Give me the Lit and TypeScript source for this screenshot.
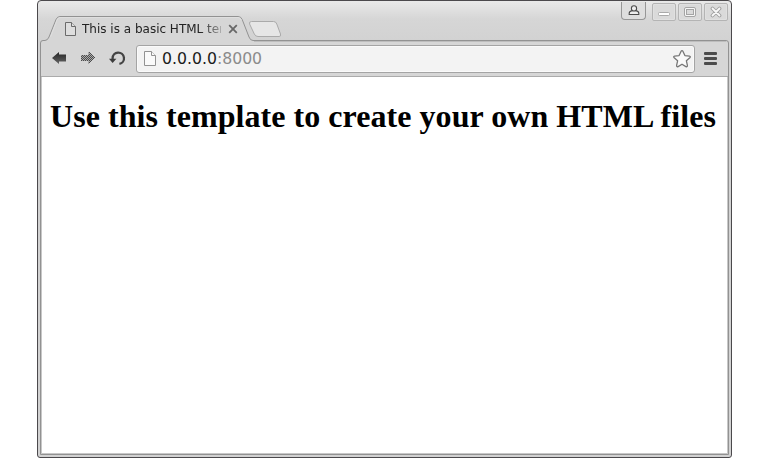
import { LitElement, html, css, svg } from "lit";
import { customElement } from "lit/decorators.js";

const pageIcon = (w: number, h: number, stroke: string, fill: string) => html`
  <svg width=${w} height=${h} viewBox="0 0 ${w} ${h}" fill=${fill} stroke=${stroke}>
    <path d="M.5.5H${w - 4.5}L${w - 0.5} 4.5V${h - 0.5}H.5Z" /><path d="M${w - 4.5}.5V4.5H${w - 0.5}" />
  </svg>`;

const checker = Array.from({ length: 14 * 12 }, (_, i) => [i % 14, Math.floor(i / 14)])
  .filter(([x, y]) => (x + y) % 2 === 0 && (x < 8 ? y >= 3 && y <= 8 : Math.abs(y - 5.5) <= 13.5 - x))
  .map(([x, y]) => svg`<rect x=${x} y=${y} width="1" height="1" />`);

@customElement("app-root")
export class AppRoot extends LitElement {
  static styles = css`
    :host { display: block; width: 770px; height: 458px; background: #fff; overflow: hidden; }
    * { box-sizing: border-box; }
    svg { display: block; flex: none; }
    .window {
      position: relative; display: flex; flex-direction: column;
      width: 695px; height: 458px; margin-left: 37px;
      border: 1px solid #4b494c; border-radius: 4px 4px 3px 3px;
      background: linear-gradient(#e9e9e9 0, #d6d6d6 18px, #d2d2d2 40px);
      overflow: hidden; font-family: "DejaVu Sans", sans-serif;
    }
    .outline { position: absolute; left: -1px; top: -1px; }
    .strip { position: relative; display: flex; height: 39px; flex: none; }
    .tab { display: flex; align-items: center; width: 205px; height: 25px; margin: 15px 0 0 9px; padding-left: 18px; }
    .title {
      width: 139px; margin-left: 6px; overflow: hidden; white-space: nowrap;
      font-size: 12px; line-height: 16px; color: #222;
      -webkit-mask-image: linear-gradient(90deg, #000 118px, transparent 150px);
      mask-image: linear-gradient(90deg, #000 118px, transparent 150px);
    }
    .close { margin-left: 7px; }
    .controls { display: flex; margin-left: auto; padding: 2px 1px 0 0; }
    .user {
      display: flex; justify-content: center; width: 25px; height: 18px; margin: -1px 6px 0 0; padding-top: 3px;
      border: 1px solid #969696; border-top: 0; border-radius: 0 0 4px 4px; background: #dedede;
    }
    .ctl {
      display: flex; align-items: center; justify-content: center; width: 24px; height: 18px; margin-right: 2px;
      border: 1px solid #b4b4b4; border-radius: 2px; background: #dadada; box-shadow: inset 0 0 0 1px #e0e0e0;
    }
    .toolbar { position: relative; display: flex; align-items: center; height: 37px; flex: none; padding: 1px 14px 0 14px; }
    .back { margin-top: -3px; }
    .forward { margin: -3px 0 0 15px; }
    .reload { margin: -1px 0 0 14px; }
    .address {
      display: flex; align-items: center; flex: 1; height: 28px; margin: -1px 9px 0 10px; padding: 0 3px 0 7px;
      border: 1px solid #a4a4a4; border-radius: 3px; background: #f3f3f3; box-shadow: inset 0 0 0 1px #fafafa;
    }
    .url { margin-left: 6px; font-size: 15.7px; line-height: 20px; color: #1b1b1b; white-space: nowrap; }
    .port { color: #8b8b8b; }
    .star { margin-left: auto; }
    .menu { margin-top: -2px; }
    .page { position: relative; flex: 1; margin: 0 4px 4px 4px; background: #fff; padding: 21px 8px; }
    h1 { margin: 0; font: bold 32px/37px "Liberation Serif", serif; letter-spacing: .05px; color: #000; white-space: nowrap; }
  `;

  render() {
    return html`
      <div class="window">
        <svg class="outline" width="695" height="458" viewBox="0 0 695 458" fill="none">
          <path d="M3.5 454.5V43Q3.5 40.5 6 40.5H8Q10.5 40.5 12 37L19 19.5Q20.3 16.5 23 16.5H201Q204 16.5 205.2 19.5L212 37Q213.3 40.5 216 40.5H689Q691.5 40.5 691.5 43V454.5Z" fill="#d6d6d6" stroke="#929292" />
          <path d="M13.5 37L20 20.2Q21 17.5 23 17.5H201Q203.3 17.5 204.3 20" stroke="#dfdfdf" />
          <path d="M217 41.5H689" stroke="#bdbdbd" />
          <path d="M214.5 21.5H236.5Q239 21.5 239.8 24L243.5 34Q244.3 36.5 242 36.5H221Q218.4 36.5 217.3 34L212.6 24Q211.8 21.5 214.5 21.5Z" fill="#e6e6e6" stroke="#aaa" />
          <path d="M4 76.5H691" stroke="#ababab" />
          <path d="M4.5 77V453.5H690.5V77" stroke="#c7c7c7" />
        </svg>
        <div class="strip">
          <div class="tab">
            ${pageIcon(11, 14, "#6b6b6b", "#dedede")}
            <span class="title">This is a basic HTML template</span>
            <svg class="close" width="10" height="10" viewBox="0 0 10 10" stroke="#686868" stroke-width="1.8"><path d="M1.2 1.2L8.8 8.8M8.8 1.2L1.2 8.8" /></svg>
          </div>
          <div class="controls">
            <div class="user">
              <svg width="12" height="12" viewBox="0 0 12 12" fill="#eee" stroke="#4b4b4b" stroke-width="1.1"><path d="M4.2 5.6Q1.2 6.3 1.2 8.3V9.5H10.8V8.3Q10.8 6.3 7.8 5.6" /><circle cx="6" cy="3.4" r="2.6" /></svg>
            </div>
            <div class="ctl"><svg width="14" height="12" viewBox="0 0 14 12" fill="#fff" stroke="#aaa"><rect x="1.5" y="6.5" width="11" height="3" rx="1" /></svg></div>
            <div class="ctl"><svg width="14" height="12" viewBox="0 0 14 12" fill="#f6f6f6" stroke="#a4a4a4"><rect x="1.5" y="1.5" width="11" height="9" rx="1.5" /><rect x="3.5" y="3.5" width="7" height="5" fill="#d9d9d9" /></svg></div>
            <div class="ctl"><svg width="12" height="12" viewBox="0 0 12 12" fill="none" stroke-linecap="round"><path d="M2.5 2.5L9.5 9.5M9.5 2.5L2.5 9.5" stroke="#a0a0a0" stroke-width="3.8" /><path d="M2.5 2.5L9.5 9.5M9.5 2.5L2.5 9.5" stroke="#f8f8f8" stroke-width="1.8" /></svg></div>
          </div>
        </div>
        <div class="toolbar">
          <svg class="back" width="14" height="12" viewBox="0 0 14 12">
            <defs><linearGradient id="g" x1="0" y1="0" x2="0" y2="1"><stop stop-color="#222" /><stop offset="1" stop-color="#666" /></linearGradient></defs>
            <path d="M0 6L7 0V2.5H14V9.5H7V12Z" fill="url(#g)" />
          </svg>
          <svg class="forward" width="14" height="12" viewBox="0 0 14 12" fill="#4c4c4c" shape-rendering="crispEdges">
            <path d="M14 6L7 0V3H0V9H7V12Z" fill="#a9a9a9" />${checker}
          </svg>
          <svg class="reload" width="17" height="16" viewBox="0 0 17 16" fill="none">
            <path d="M3.6 9V7.3A5.7 5.7 0 1 1 10.4 12.9" stroke="#444" stroke-width="2.3" /><path d="M0 7.7H7.4L3.6 12Z" fill="#3c3c3c" />
          </svg>
          <div class="address">
            ${pageIcon(12, 15, "#929292", "#fafafa")}
            <span class="url">0.0.0.0<span class="port">:8000</span></span>
            <svg class="star" width="18" height="18" viewBox="0 0 18 18" fill="#fafafa" stroke="#777" stroke-width="1.3" stroke-linejoin="round"><path d="M8 1.4Q9 0 10 1.4L11.9 5.6L16.4 6.1Q18 6.5 16.8 7.7L13.4 10.8L14.4 15.4Q14.5 17.2 12.9 16.6L9 14.2L5.1 16.6Q3.5 17.2 3.6 15.4L4.6 10.8L1.2 7.7Q0 6.5 1.6 6.1L6.1 5.6Z" /></svg>
          </div>
          <svg class="menu" width="13" height="13" viewBox="0 0 13 13" fill="#4b4b4b"><rect width="13" height="3" rx="1" /><rect y="5" width="13" height="3" rx="1" /><rect y="10" width="13" height="3" rx="1" /></svg>
        </div>
        <div class="page"><h1>Use this template to create your own HTML files</h1></div>
      </div>`;
  }
}
